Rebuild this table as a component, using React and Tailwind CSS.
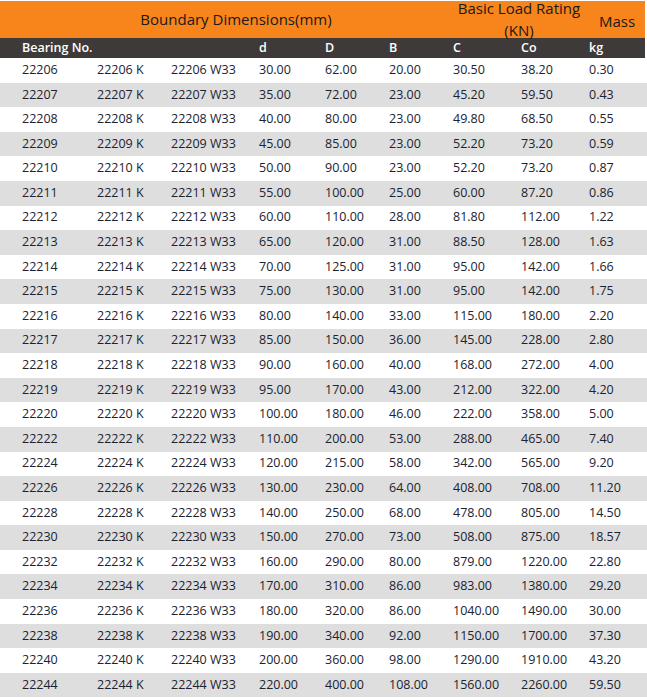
import React from "react";

const rows = [
  ["22206","30.00","62.00","20.00","30.50","38.20","0.30"],
  ["22207","35.00","72.00","23.00","45.20","59.50","0.43"],
  ["22208","40.00","80.00","23.00","49.80","68.50","0.55"],
  ["22209","45.00","85.00","23.00","52.20","73.20","0.59"],
  ["22210","50.00","90.00","23.00","52.20","73.20","0.87"],
  ["22211","55.00","100.00","25.00","60.00","87.20","0.86"],
  ["22212","60.00","110.00","28.00","81.80","112.00","1.22"],
  ["22213","65.00","120.00","31.00","88.50","128.00","1.63"],
  ["22214","70.00","125.00","31.00","95.00","142.00","1.66"],
  ["22215","75.00","130.00","31.00","95.00","142.00","1.75"],
  ["22216","80.00","140.00","33.00","115.00","180.00","2.20"],
  ["22217","85.00","150.00","36.00","145.00","228.00","2.80"],
  ["22218","90.00","160.00","40.00","168.00","272.00","4.00"],
  ["22219","95.00","170.00","43.00","212.00","322.00","4.20"],
  ["22220","100.00","180.00","46.00","222.00","358.00","5.00"],
  ["22222","110.00","200.00","53.00","288.00","465.00","7.40"],
  ["22224","120.00","215.00","58.00","342.00","565.00","9.20"],
  ["22226","130.00","230.00","64.00","408.00","708.00","11.20"],
  ["22228","140.00","250.00","68.00","478.00","805.00","14.50"],
  ["22230","150.00","270.00","73.00","508.00","875.00","18.57"],
  ["22232","160.00","290.00","80.00","879.00","1220.00","22.80"],
  ["22234","170.00","310.00","86.00","983.00","1380.00","29.20"],
  ["22236","180.00","320.00","86.00","1040.00","1490.00","30.00"],
  ["22238","190.00","340.00","92.00","1150.00","1700.00","37.30"],
  ["22240","200.00","360.00","98.00","1290.00","1910.00","43.20"],
  ["22244","220.00","400.00","108.00","1560.00","2260.00","59.50"],
];

const cols = "grid grid-cols-[75px_74px_88px_66px_64px_64px_68px_68px_1fr]";

export default function App() {
  return (
    <div className="w-[647px] h-[698px] overflow-hidden bg-white pt-px" style={{ fontFamily: '"Open Sans", sans-serif' }}>
      <div className="mr-[2px] h-[37px] bg-[#f8841c] flex text-[#1a1a1a] text-[15px]">
        <div className="w-[449px] pl-[23px] flex items-center justify-center">Boundary Dimensions(mm)</div>
        <div className="w-[140px] flex flex-col items-center leading-[15px] gap-[7px]">
          <span>Basic Load Rating</span>
          <span>(KN)</span>
        </div>
        <div className="flex-1 flex items-center justify-center pt-[3px]">Mass</div>
      </div>
      <div className={`mr-[2px] h-[20px] bg-[#3e3a39] text-white text-[12.5px] font-semibold pl-[22px] items-center ${cols}`}>
        <div className="col-span-3">Bearing No.</div>
        <div>d</div>
        <div>D</div>
        <div>B</div>
        <div>C</div>
        <div>Co</div>
        <div>kg</div>
      </div>
      {rows.map((r, i) => (
        <div
          key={r[0]}
          className={`h-[24.6px] pl-[22px] items-center text-[12.5px] text-[#1c2230] ${cols} ${i % 2 === 1 ? "bg-[#dedede]" : "bg-white"}`}
        >
          <div>{r[0]}</div>
          <div>{r[0]} K</div>
          <div>{r[0]} W33</div>
          {r.slice(1).map((v, j) => (
            <div key={j}>{v}</div>
          ))}
        </div>
      ))}
    </div>
  );
}
